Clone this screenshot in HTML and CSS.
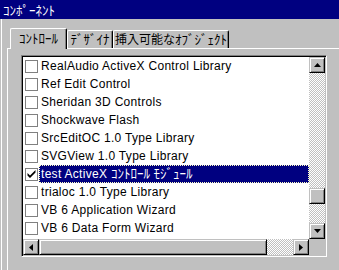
FILE: index.html
```html
<!DOCTYPE html>
<html>
<head>
<meta charset="utf-8">
<link rel="stylesheet" href="styles.css">
</head>
<body>
<div class="title">ｺﾝﾎﾟｰﾈﾝﾄ</div>
<div class="frame">
  <div class="tabs">
    <div class="tab tab-active">ｺﾝﾄﾛｰﾙ</div>
    <div class="tab tab-design">ﾃﾞｻﾞｲﾅ</div>
    <div class="tab tab-insert"><span class="kanji">挿入可能な</span>ｵﾌﾞｼﾞｪｸﾄ</div>
  </div>
  <div class="panel">
    <div class="listbox">
      <div class="rows">
        <div class="row"><span class="check"></span><span class="label">RealAudio ActiveX Control Library</span></div>
        <div class="row"><span class="check"></span><span class="label">Ref Edit Control</span></div>
        <div class="row"><span class="check"></span><span class="label">Sheridan 3D Controls</span></div>
        <div class="row"><span class="check"></span><span class="label">Shockwave Flash</span></div>
        <div class="row"><span class="check"></span><span class="label">SrcEditOC 1.0 Type Library</span></div>
        <div class="row"><span class="check"></span><span class="label">SVGView 1.0 Type Library</span></div>
        <div class="row"><span class="check"><svg width="11" height="11" viewBox="0 0 11 11"><path d="M1.5 4 L1.5 6.5 L4 9 L9.5 3.5 L9.5 1 L4 6.5 Z" fill="#000"/></svg></span><span class="label selected">test ActiveX <span class="kana">ｺﾝﾄﾛｰﾙ ﾓｼﾞｭｰﾙ</span></span></div>
        <div class="row"><span class="check"></span><span class="label">trialoc 1.0 Type Library</span></div>
        <div class="row"><span class="check"></span><span class="label">VB 6 Application Wizard</span></div>
        <div class="row"><span class="check"></span><span class="label">VB 6 Data Form Wizard</span></div>
      </div>
      <div class="vscroll">
        <div class="sbtn"><svg width="7" height="4" viewBox="0 0 7 4"><path d="M0 4 L7 4 L3.5 0 Z" fill="#000"/></svg></div>
        <div class="vtrack">
          <div class="vspace"></div>
          <div class="sbtn"></div>
        </div>
        <div class="sbtn"><svg width="7" height="4" viewBox="0 0 7 4"><path d="M0 0 L7 0 L3.5 4 Z" fill="#000"/></svg></div>
      </div>
      <div class="hscroll">
        <div class="sbtn"><svg width="4" height="7" viewBox="0 0 4 7"><path d="M4 0 L4 7 L0 3.5 Z" fill="#000"/></svg></div>
        <div class="hthumb"></div>
        <div class="htrack"></div>
        <div class="sbtn"><svg width="4" height="7" viewBox="0 0 4 7"><path d="M0 0 L0 7 L4 3.5 Z" fill="#000"/></svg></div>
      </div>
      <div class="corner"></div>
    </div>
  </div>
</div>
</body>
</html>
```
FILE: styles.css
```css
html, body {
  margin: 0;
  padding: 0;
}
body {
  width: 339px;
  height: 270px;
  overflow: hidden;
  background: #c0c0c0;
  font-family: "Liberation Sans", "Noto Sans CJK JP", sans-serif;
  font-size: 12px;
  color: #000;
}
.title {
  height: 19px;
  line-height: 19px;
  background: #000080;
  color: #fff;
  padding-left: 3px;
  font-family: "Noto Sans CJK JP", sans-serif;
  font-size: 13px;
}
.frame {
  margin-left: 1px;
  border-left: 1px solid #fff;
  height: 251px;
  overflow: hidden;
}
.tabs {
  display: flex;
  align-items: flex-end;
  height: 20px;
  margin-top: 9px;
  padding-left: 8px;
}
.tab {
  box-sizing: border-box;
  height: 18px;
  background: #c0c0c0;
  border-top: 1px solid #fff;
  border-left: 1px solid #fff;
  border-right: 1px solid #000;
  box-shadow: inset -1px 0 #808080;
  border-radius: 2px 2px 0 0;
  font-family: "Noto Sans CJK JP", sans-serif;
  font-size: 13px;
  line-height: 16px;
  text-align: center;
  white-space: nowrap;
}
.kanji {
  font-size: 12px;
}
.tab-active {
  height: 21px;
  width: 57px;
  margin-bottom: -1px;
  line-height: 17px;
  position: relative;
  z-index: 1;
}
.tab-design {
  width: 46px;
}
.tab-insert {
  width: 116px;
}
.panel {
  margin-left: 5px;
  border-top: 1px solid #fff;
  border-left: 1px solid #fff;
  padding: 6px 0 0 13px;
  height: 220px;
}
.listbox {
  box-sizing: border-box;
  width: 306px;
  height: 202px;
  border: 1px solid;
  border-color: #808080 #fff #fff #808080;
  padding: 1px;
  box-shadow: inset 1px 1px #000, inset -1px -1px #c0c0c0;
  background: #fff;
  display: grid;
  grid-template-columns: 286px 16px;
  grid-template-rows: 182px 16px;
}
.rows {
  overflow: hidden;
}
.row {
  display: flex;
  align-items: center;
  height: 18px;
  padding-left: 2px;
}
.check {
  box-sizing: border-box;
  width: 13px;
  height: 13px;
  border: 1px solid #808080;
  background: #fff;
  display: flex;
  align-items: center;
  justify-content: center;
  flex: none;
}
.check svg {
  display: block;
}
.label {
  box-sizing: border-box;
  flex: 1;
  height: 18px;
  line-height: 16px;
  margin-left: 1px;
  padding-left: 1px;
  border: 1px solid transparent;
  white-space: nowrap;
  font-size: 12px;
  letter-spacing: 0.3px;
}
.kana {
  font-size: 13px;
  letter-spacing: 0;
}
.label.selected {
  background: #000080;
  color: #fff;
  border: 1px dotted #ffffc0;
}
.vscroll {
  display: flex;
  flex-direction: column;
}
.sbtn, .hthumb {
  box-sizing: border-box;
  width: 16px;
  height: 16px;
  flex: none;
  background: #c0c0c0;
  border: 1px solid;
  border-color: #c0c0c0 #000 #000 #c0c0c0;
  box-shadow: inset 1px 1px #fff, inset -1px -1px #808080;
  display: flex;
  align-items: center;
  justify-content: center;
}
.sbtn svg {
  display: block;
}
.vtrack, .htrack {
  flex: 1;
  background: repeating-conic-gradient(#c0c0c0 0 25%, #fff 0 50%) 0 0 / 2px 2px;
}
.vtrack {
  display: flex;
  flex-direction: column;
}
.vspace {
  height: 115px;
  flex: none;
}
.hscroll {
  display: flex;
}
.hthumb {
  width: 228px;
}
.corner {
  background: #c0c0c0;
}
```
